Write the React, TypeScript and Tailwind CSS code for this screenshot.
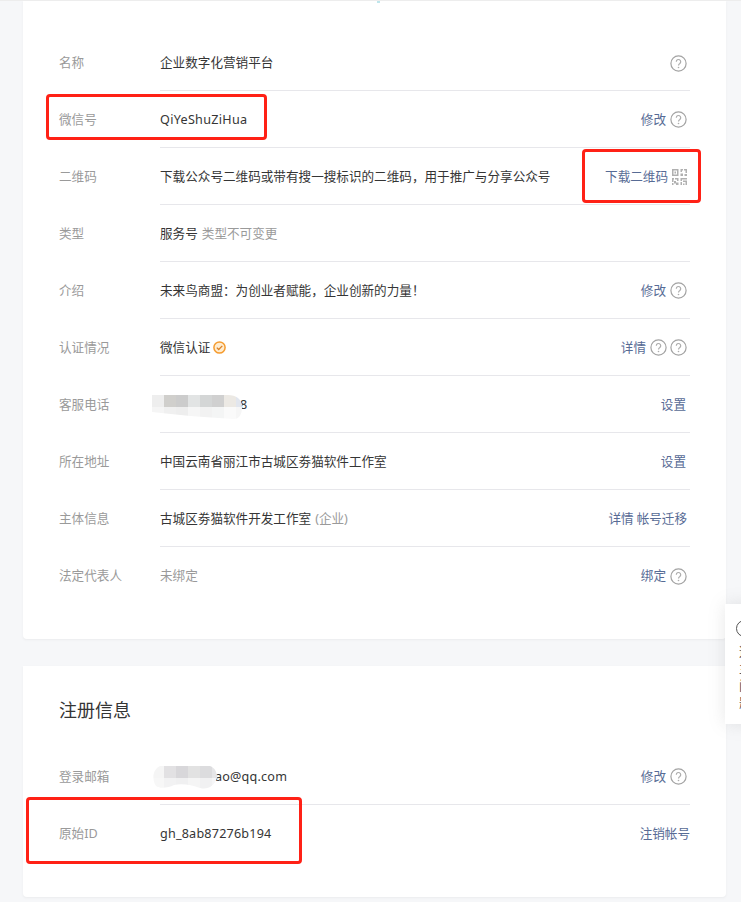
import React from 'react';

const FONT = 'font-["Noto_Sans","Noto_Sans_CJK_SC",sans-serif]';

const Help = () => (
  <svg width="17" height="17" viewBox="0 0 17 17" fill="none" className="shrink-0">
    <circle cx="8.500" cy="8.500" r="7.600" stroke="#a3a3a3" strokeWidth="1.200" />
    <path d="M6.300 6.700a2.200 2.200 0 1 1 3.500 1.800c-.9.600-1.300 1-1.300 2" stroke="#adadad" strokeWidth="1.200" />
    <circle cx="8.500" cy="12.500" r=".8" fill="#adadad" />
  </svg>
);

const QrIcon = () => (
  <svg width="15" height="16" viewBox="0 0 15 16" className="shrink-0 opacity-70" fill="#8f8f8f">
    <path fillRule="evenodd" d="M0 0h6.500v7H0zM1.500 1.500v4h3.500v-4z" />
    <rect x="2.500" y="2.500" width="1.500" height="2" />
    <path d="M8.500 0H11v1.500H10V3H8.500zM12 0h3v4h-1.500V1.500H12zM8.500 4.500H11V7H8.500zM12.500 5H15v2h-2.500z" />
    <path d="M0 9h2v1.500H1.500V13H0zM3 9h3.500v3H5v-1.500H3zM2 12h2v1.500H6.500V16H4v-1.500H2zM0 14h1.500v2H0z" />
    <path d="M8.500 9h6.500v1.500H10V12H8.500zM11 11.500h4V16h-1.500v-3H11zM8.500 13H10v3H8.500zM11 14.500h1.500V16H11z" />
  </svg>
);

const Verified = () => (
  <svg width="13" height="13" viewBox="0 0 13 13" fill="none" className="ml-[3px] shrink-0">
    <circle cx="6.500" cy="6.500" r="5.600" fill="#ffeccf" stroke="#f59c30" strokeWidth="1.500" />
    <path d="M3.800 6.600 5.700 8.500 9.300 4.900" stroke="#d98128" strokeWidth="1.300" />
  </svg>
);

const Link = ({ children }: { children: React.ReactNode }) => (
  <span className="text-[#576b95]">{children}</span>
);

const Row = ({
  label,
  right,
  last,
  children,
}: {
  label: string;
  right?: React.ReactNode;
  last?: boolean;
  children: React.ReactNode;
}) => (
  <div className="flex h-[57px] items-stretch">
    <div className="flex w-[101px] shrink-0 items-center pt-[2px] text-[#9a9a9a]">{label}</div>
    <div className={`flex flex-1 items-center justify-between pt-[2px] ${last ? '' : 'border-b border-[#e7e7eb]'}`}>
      <div className="flex items-center text-[#353535]">{children}</div>
      {right && <div className="flex items-center">{right}</div>}
    </div>
  </div>
);

const phoneCells = [
  ['#eeeeee', '#d0cfcc', '#cccccc', '#e2e4e4', '#d4d6d6', '#d0d0d0', '#ece9e4', '#e2e6ee'],
  ['#f5f5f5', '#f0f0f0', '#eeeeee', '#f6f6f6', '#f2f2f2', '#f4f5f5', '#fafafa', '#f6f6f6'],
];

const emailCells = [
  ['#f5f5f5', '#e2e1e3', '#d8d7da', '#e2e2e2', '#dcdcde', '#e6e6e8'],
  ['#f7f7f7', '#f2f2f3', '#f0f0f1', '#f5f5f5', '#f1f1f2', '#f6f6f7'],
];

const Mosaic = ({
  cells,
  width,
  height,
  clip,
  id,
  className,
}: {
  cells: string[][];
  width: number;
  height: number;
  clip: string;
  id: string;
  className: string;
}) => (
  <svg width={width} height={height} viewBox={`0 0 ${width} ${height}`} className={className}>
    <clipPath id={id}>
      <path d={clip} />
    </clipPath>
    <g clipPath={`url(#${id})`}>
      {cells.map((row, y) =>
        row.map((fill, x) => <rect key={`${x}-${y}`} x={x * 12} y={y * 12} width="12" height="12" fill={fill} />),
      )}
    </g>
  </svg>
);

const App = () => {
  return (
    <div className={`relative h-[902px] w-[741px] overflow-hidden border-t border-[#ededed] bg-[#f6f7f9] text-[12.6px] ${FONT}`}>
      <div className="ml-[23px] flex w-[703px] flex-col gap-[27px]">
        <section className="rounded-b bg-white pl-9 pr-9 pb-[35px] pt-[33px] shadow-[0_1px_2px_rgba(150,150,150,0.1)]">
          <Row label="名称" right={<span className="mr-[3px] flex"><Help /></span>}>
            企业数字化营销平台
          </Row>
          <Row
            label="微信号"
            right={
              <div className="mr-[3px] flex items-center gap-[4px]">
                <Link>修改</Link>
                <Help />
              </div>
            }
          >
            <span className="tracking-[0.3px]">QiYeShuZiHua</span>
          </Row>
          <Row
            label="二维码"
            right={
              <div className="mr-[3px] flex items-center gap-[4px]">
                <Link>下载二维码</Link>
                <QrIcon />
              </div>
            }
          >
            下载公众号二维码或带有搜一搜标识的二维码，用于推广与分享公众号
          </Row>
          <Row label="类型">
            服务号<span className="ml-1 text-[#9a9a9a]">类型不可变更</span>
          </Row>
          <Row
            label="介绍"
            right={
              <div className="mr-[3px] flex items-center gap-[4px]">
                <Link>修改</Link>
                <Help />
              </div>
            }
          >
            未来鸟商盟：为创业者赋能，企业创新的力量！
          </Row>
          <Row
            label="认证情况"
            right={
              <div className="mr-[3px] flex items-center gap-[3px]">
                <span className="mr-px"><Link>详情</Link></span>
                <Help />
                <Help />
              </div>
            }
          >
            微信认证
            <Verified />
          </Row>
          <Row label="客服电话" right={<span className="mr-[4px]"><Link>设置</Link></span>}>
            <span className="pl-[80px]">8</span>
          </Row>
          <Row label="所在地址" right={<span className="mr-[4px]"><Link>设置</Link></span>}>
            中国云南省丽江市古城区劵猫软件工作室
          </Row>
          <Row
            label="主体信息"
            right={
              <div className="mr-[3px] flex items-center gap-[3px]">
                <Link>详情</Link>
                <Link>帐号迁移</Link>
              </div>
            }
          >
            古城区劵猫软件开发工作室<span className="ml-1 text-[#9a9a9a]">(企业)</span>
          </Row>
          <Row
            label="法定代表人"
            last
            right={
              <div className="mr-[3px] flex items-center gap-[4px]">
                <Link>绑定</Link>
                <Help />
              </div>
            }
          >
            <span className="text-[#9a9a9a]">未绑定</span>
          </Row>
        </section>

        <section className="rounded-b bg-white pl-9 pr-9 pb-[35px] pt-[30px] shadow-[0_1px_2px_rgba(150,150,150,0.1)]">
          <h2 className="mb-[24px] text-[18px] leading-7 font-normal text-[#353535]">注册信息</h2>
          <Row
            label="登录邮箱"
            right={
              <div className="mr-[3px] flex items-center gap-[4px]">
                <Link>修改</Link>
                <Help />
              </div>
            }
          >
            <span className="pl-[55px] tracking-[0.2px]">ao@qq.com</span>
          </Row>
          <Row label="原始ID" last right={<Link>注销帐号</Link>}>
            <span className="tracking-[0.2px]">gh_8ab87276b194</span>
          </Row>
        </section>
      </div>

      {/* mosaic patches over the private values */}
      <Mosaic
        id="phone-patch"
        cells={phoneCells}
        width={96}
        height={24}
        clip="M0 0H76C84 0 90 4 90 12C90 18 88 24 82 24C50 22 25 20 0 17Z"
        className="absolute left-[152px] top-[394px]"
      />
      <Mosaic
        id="email-patch"
        cells={emailCells}
        width={72}
        height={24}
        clip="M8 0H58C63 2 65 6 65 12C62 20 56 24 48 22C40 19 30 17 22 19C16 22 8 23 4 20C0 14 0 4 8 0Z"
        className="absolute left-[152px] top-[765px]"
      />

      {/* red annotation boxes */}
      <div className="absolute left-[46px] top-[93px] h-[46px] w-[221px] rounded-[4px] border-[3px] border-[#ff2116]" />
      <div className="absolute left-[582px] top-[148px] h-[54px] w-[119px] rounded-[4px] border-[3px] border-[#ff2116]" />
      <div className="absolute left-[26px] top-[796px] h-[67px] w-[276px] rounded-[4px] border-[3px] border-[#ff2116]" />

      {/* speck of the cut off element above the card */}
      <div className="absolute left-[377px] top-0 h-[2px] w-[3px] bg-[#bfe6ec]" />

      {/* floating panel cut off at the window edge */}
      <div className="absolute left-[725px] top-[603px] h-[120px] w-[120px] bg-white pl-[11px] pt-[16px] text-[#555555] shadow-[0_0_16px_rgba(120,120,120,0.18)]">
        <div className="mb-[6px] h-[17px] w-[17px] rounded-full border border-[#555555]" />
        <p className="ml-[3px] w-[13px] text-[12.6px] leading-[17px] break-all">这主间题</p>
      </div>
    </div>
  );
};

export default App;
